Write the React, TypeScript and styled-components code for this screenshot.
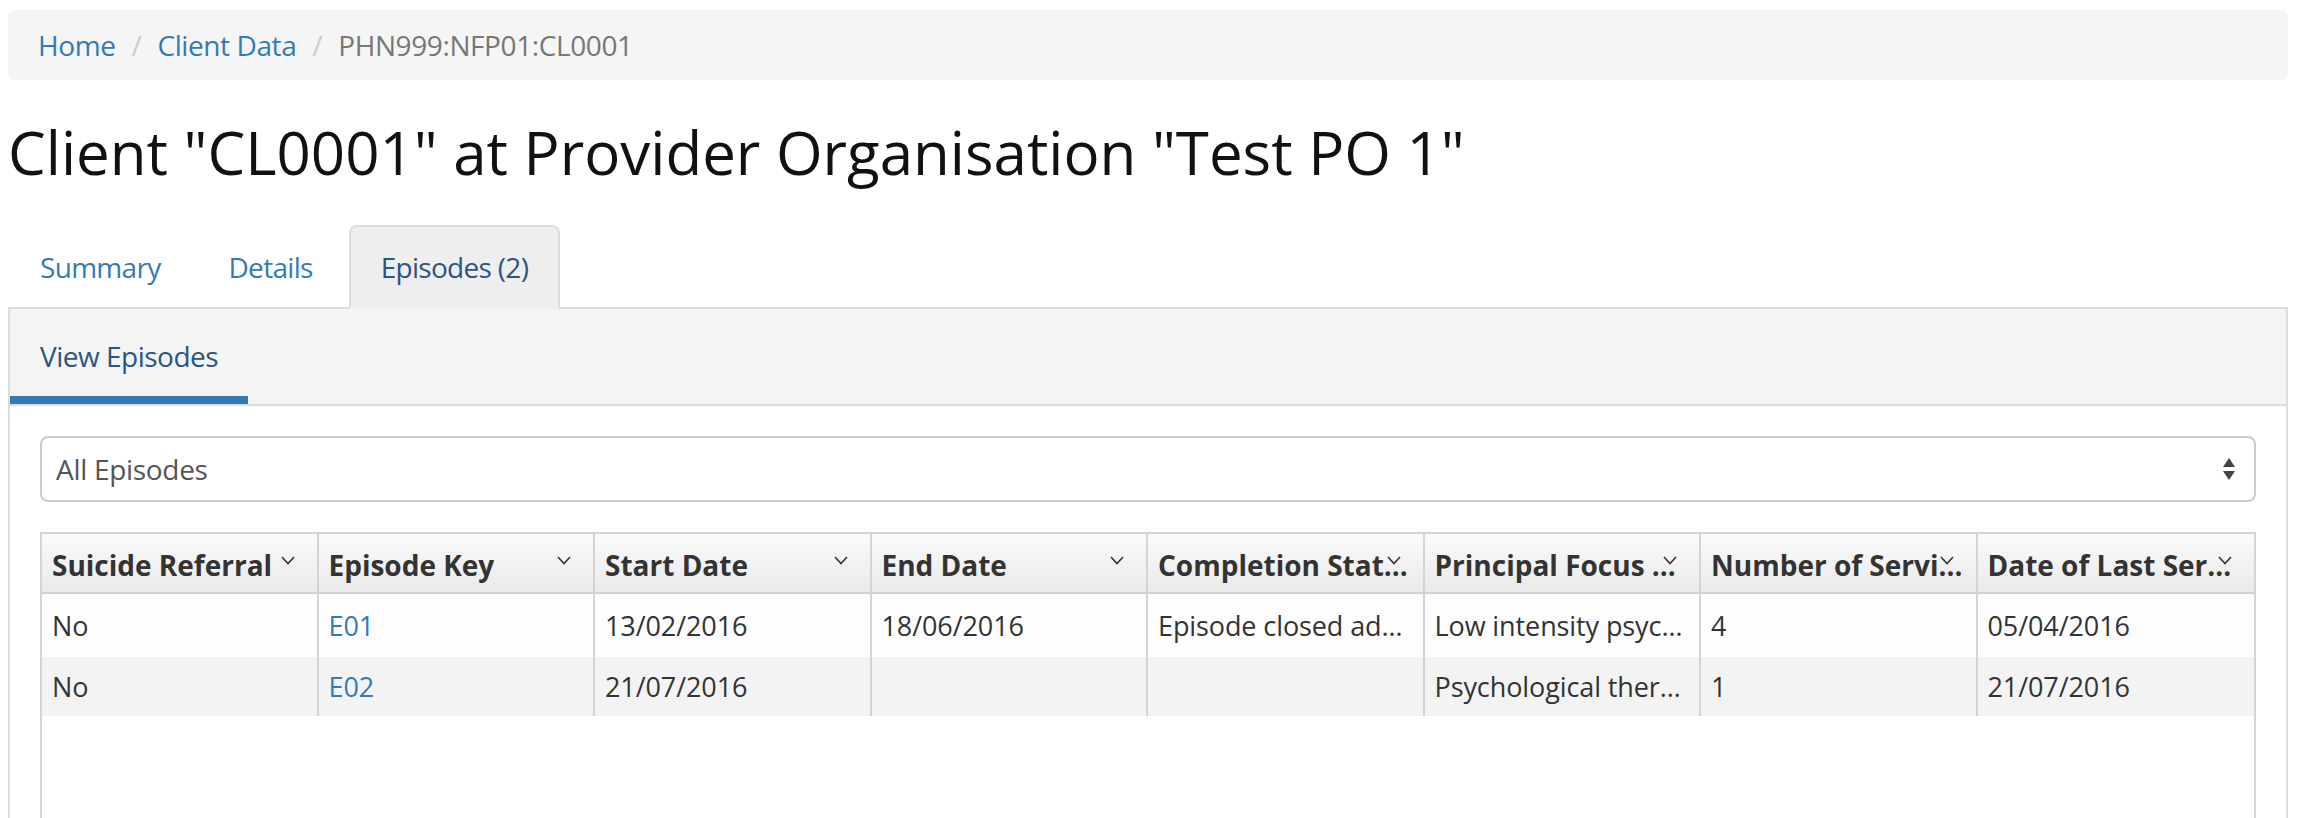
import styled, { createGlobalStyle } from 'styled-components';

const GlobalStyle = createGlobalStyle`
    body {
        margin: 0;
        background: #fff;
        font-family: "Open Sans", "Liberation Sans", sans-serif;
        color: #333;
    }
`

const Page = styled.div`
    padding: 10px 14px 0 8px;
`

const Breadcrumb = styled.ol`
    display: flex;
    align-items: center;
    height: 70px;
    margin: 0;
    padding: 0 30px;
    list-style: none;
    background: #f5f5f5;
    border-radius: 8px;
    font-size: 28px;
    letter-spacing: -0.4px;
`

const Crumb = styled.li<{ $active?: boolean }>`
    color: ${({ $active }) => $active ? '#777' : '#337ab7'};
`

const Sep = styled.li`
    color: #ccc;
    padding: 0 16px;
`

const Title = styled.h1`
    margin: 39px 0 40px 0;
    font-size: 60px;
    font-weight: 400;
    line-height: 66px;
    color: #111;
`

const Tabs = styled.ul`
    display: flex;
    margin: 0 0 -2px 0;
    padding: 0;
    list-style: none;
    position: relative;
    z-index: 1;
`

const Tab = styled.li<{ $active?: boolean }>`
    margin-right: 4px;
    padding: 20px 30px;
    font-size: 28px;
    line-height: 40px;
    letter-spacing: -0.7px;
    border: 2px solid ${({ $active }) => $active ? '#ddd' : 'transparent'};
    border-bottom: 2px solid ${({ $active }) => $active ? '#eee' : 'transparent'};
    border-radius: 8px 8px 0 0;
    background: ${({ $active }) => $active ? '#eee' : 'transparent'};
    color: ${({ $active }) => $active ? '#2b5683' : '#337ab7'};
`

const Panel = styled.div`
    border: 2px solid #ddd;
`

const SubNav = styled.div`
    display: flex;
    background: #f4f4f4;
    border-bottom: 2px solid #ddd;
`

const SubTab = styled.div`
    padding: 27px 30px 20px 30px;
    font-size: 28px;
    line-height: 40px;
    letter-spacing: -0.5px;
    color: #2b5683;
    border-bottom: 8px solid #337ab7;
`

const PanelBody = styled.div`
    padding: 30px 30px 0 30px;
`

const SelectBox = styled.div`
    display: flex;
    align-items: center;
    justify-content: space-between;
    height: 62px;
    padding: 0 18px 0 14px;
    border: 2px solid #ccc;
    border-radius: 8px;
    font-size: 28px;
    letter-spacing: -0.3px;
    color: #555;
`

const Grid = styled.div`
    margin-top: 30px;
    height: 300px;
    border: 2px solid #d4d4d4;
    border-bottom: none;
`

const Row = styled.div<{ $kind: 'head' | 'odd' | 'even' }>`
    display: grid;
    grid-template-columns: repeat(8, 1fr);
    height: ${({ $kind }) => $kind === 'head' ? '58px' : $kind === 'odd' ? '63px' : '59px'};
    background: ${({ $kind }) => $kind === 'head' ? 'linear-gradient(to bottom, #fafafa, #eaeaea)' : $kind === 'odd' ? '#fdfdfd' : '#f3f3f3'};
    border-bottom: ${({ $kind }) => $kind === 'head' ? '2px solid #d4d4d4' : 'none'};
`

const HeadCell = styled.div`
    position: relative;
    display: flex;
    align-items: center;
    min-width: 0;
    padding: 3px 10px 0 10px;
    font-size: 28px;
    font-weight: 700;
    color: #333;
    border-right: 2px solid #d4d4d4;
    &:last-child { border-right: none; }
`

const Cell = styled.div`
    display: flex;
    align-items: center;
    min-width: 0;
    padding: 0 10px;
    font-size: 27px;
    letter-spacing: -0.1px;
    color: #333;
    border-right: 2px solid #d4d4d4;
    &:last-child { border-right: none; }
`

const Clip = styled.span`
    overflow: hidden;
    white-space: nowrap;
    text-overflow: ellipsis;
`

const Link = styled.span`
    color: #337ab7;
`

const Chevron = styled.svg`
    position: absolute;
    right: 22px;
    top: 22px;
`

const columns = ['Suicide Referral', 'Episode Key', 'Start Date', 'End Date', 'Completion Status', 'Principal Focus of Treatment', 'Number of Service Contacts', 'Date of Last Service Contact'];

const rows = [
    ['No', 'E01', '13/02/2016', '18/06/2016', 'Episode closed administratively', 'Low intensity psychological intervention', '4', '05/04/2016'],
    ['No', 'E02', '21/07/2016', '', '', 'Psychological therapy', '1', '21/07/2016'],
];

export default function App() {
    return (
        <Page>
            <GlobalStyle />
            <Breadcrumb>
                <Crumb>Home</Crumb>
                <Sep>/</Sep>
                <Crumb>Client Data</Crumb>
                <Sep>/</Sep>
                <Crumb $active>PHN999:NFP01:CL0001</Crumb>
            </Breadcrumb>
            <Title>Client "CL0001" at Provider Organisation "Test PO 1"</Title>
            <Tabs>
                <Tab>Summary</Tab>
                <Tab>Details</Tab>
                <Tab $active>Episodes (2)</Tab>
            </Tabs>
            <Panel>
                <SubNav>
                    <SubTab>View Episodes</SubTab>
                </SubNav>
                <PanelBody>
                    <SelectBox>
                        <span>All Episodes</span>
                        <svg width="14" height="24" viewBox="0 0 14 24">
                            <polygon points="7,1 13,10 1,10" fill="#444" />
                            <polygon points="1,14 13,14 7,23" fill="#444" />
                        </svg>
                    </SelectBox>
                    <Grid>
                        <Row $kind="head">
                            {columns.map((c) => (
                                <HeadCell key={c}>
                                    <Clip>{c}</Clip>
                                    <Chevron width="14" height="9" viewBox="0 0 14 9">
                                        <polyline points="1,1 7,7.5 13,1" fill="none" stroke="#333" strokeWidth="1.6" />
                                    </Chevron>
                                </HeadCell>
                            ))}
                        </Row>
                        {rows.map((r, i) => (
                            <Row key={i} $kind={i % 2 === 0 ? 'odd' : 'even'}>
                                {r.map((v, j) => (
                                    <Cell key={j}>
                                        {j === 1 ? <Link>{v}</Link> : <Clip>{v}</Clip>}
                                    </Cell>
                                ))}
                            </Row>
                        ))}
                    </Grid>
                </PanelBody>
            </Panel>
        </Page>
    );
}
